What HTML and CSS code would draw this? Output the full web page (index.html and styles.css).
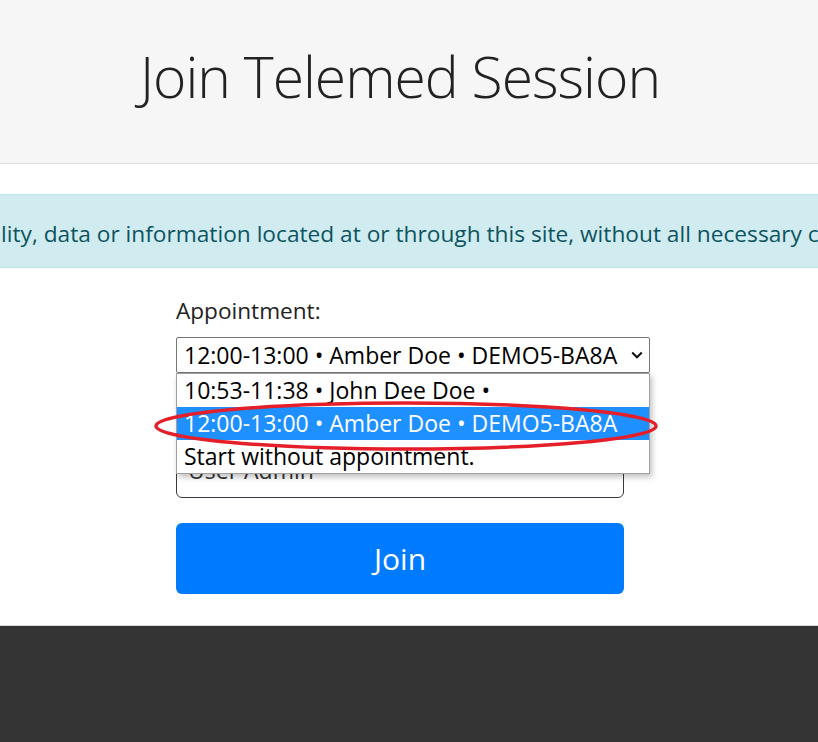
FILE: index.html
```html
<!DOCTYPE html>
<html lang="en">
<head>
  <meta charset="UTF-8" />
  <meta name="viewport" content="width=device-width, initial-scale=1.0" />
  <title>Join Telemed Session</title>
  <link rel="stylesheet" href="styles.css">
</head>
<body>
  <header class="jumbo">
    <h1>Join Telemed Session</h1>
  </header>

  <div class="alert">
    <p>lity, data or information located at or through this site, without all necessary consents.</p>
  </div>

  <div class="main">
    <form class="join-form">
      <div class="group first">
        <label>Appointment:</label>
        <div class="select">
          <span>12:00-13:00 • Amber Doe • DEMO5-BA8A</span>
          <svg class="chev" width="12" height="8" viewBox="0 0 12 8"><path d="M1.2 1.5 L6 6.3 L10.8 1.5" fill="none" stroke="#111" stroke-width="2"/></svg>
        </div>
        <ul class="dropdown">
          <li>10:53-11:38 • John Dee Doe •</li>
          <li class="active">12:00-13:00 • Amber Doe • DEMO5-BA8A</li>
          <li>Start without appointment.</li>
        </ul>
        <svg class="mark" width="520" height="60" viewBox="0 0 520 60">
          <ellipse cx="260" cy="30" rx="250" ry="23" fill="none" stroke="#e51f2a" stroke-width="3.5"/>
        </svg>
      </div>
      <div class="group">
        <label>Your name:</label>
        <div class="input">User Admin</div>
      </div>
      <button type="button" class="btn">Join</button>
    </form>
  </div>
  <footer class="footer"></footer>
</body>
</html>
```

FILE: styles.css
```css
body {
  margin: 0;
  font-family: "Open Sans", "Noto Sans", sans-serif;
  background: #fff;
  overflow: hidden;
}
.jumbo {
  height: 163px;
  background: #f6f6f6;
  border-bottom: 1px solid #dcdcdc;
  display: flex;
  align-items: center;
  justify-content: center;
  padding-right: 18px;
  box-sizing: content-box;
}
.jumbo h1 {
  margin: 0 0 12px;
  font-weight: 300;
  font-size: 57px;
  color: #222;
  letter-spacing: -1px;
}
.alert {
  margin-top: 30px;
  height: 72px;
  background: #d1ecf1;
  border-top: 1px solid #bee5eb;
  border-bottom: 1px solid #bee5eb;
  display: flex;
  align-items: center;
  overflow: hidden;
}
.alert p {
  margin: 0;
  padding: 4px 0 0 1px;
  white-space: nowrap;
  font-size: 22.7px;
  color: #0c5460;
}
.main {
  padding-right: 18px;
}
.join-form {
  width: 448px;
  margin: 0 auto;
  padding-top: 28px;
}
.group {
  position: relative;
}
.group.first {
  margin-bottom: 28px;
}
.group label {
  display: block;
  font-size: 22.6px;
  line-height: 30px;
  color: #222;
  margin-bottom: 11px;
}
.select {
  width: 474px;
  height: 36px;
  box-sizing: border-box;
  border: 1px solid #767676;
  border-radius: 2px;
  display: flex;
  align-items: center;
  justify-content: space-between;
  padding: 0 6px 0 7px;
  font-size: 23px;
  color: #000;
  white-space: nowrap;
}
.dropdown {
  position: absolute;
  top: 77px;
  left: 0;
  width: 474px;
  box-sizing: border-box;
  margin: 0;
  padding: 0;
  list-style: none;
  background: #fff;
  border: 1px solid #a0a0a0;
  box-shadow: 2px 3px 6px rgba(0,0,0,0.25);
  z-index: 2;
}
.dropdown li {
  height: 33px;
  line-height: 33px;
  padding-left: 7px;
  font-size: 23px;
  color: #000;
  white-space: nowrap;
}
.dropdown li.active {
  background: #1e90ff;
  color: #fff;
}
.mark {
  position: absolute;
  top: 100px;
  left: -30px;
  z-index: 3;
}
.input {
  height: 56px;
  box-sizing: border-box;
  border: 1px solid #343a40;
  border-radius: 6px;
  padding: 0 11px;
  display: flex;
  align-items: center;
  font-size: 23px;
  color: #333;
}
.btn {
  display: block;
  width: 100%;
  height: 71px;
  margin-top: 25px;
  margin-bottom: 31px;
  border: 0;
  border-radius: 6px;
  background: #007bff;
  color: #fff;
  font-family: inherit;
  font-size: 30px;
}
.footer {
  border-top: 1px solid #d8d8d8;
  background: #343434;
  height: 116px;
}
```
